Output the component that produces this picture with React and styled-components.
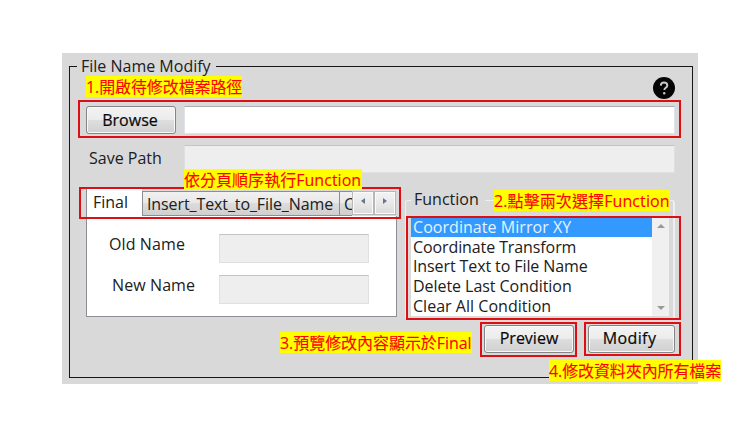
import React from "react";
import styled, { createGlobalStyle } from "styled-components";

const Global = createGlobalStyle`
  *, *::before, *::after { box-sizing: border-box; }
  body { margin: 0; background: #fff; overflow: hidden; }
  body, button, input { font: 16px/20px "Open Sans", "Noto Sans CJK TC", sans-serif; color: #202020; }
`;

const Page = styled.main`
  width: 755px;
  height: 424px;
  padding: 53px 0 0 62px;
`;
const Window = styled.div`
  position: relative;
  width: 636px;
  height: 331px;
  padding: 13px 5px 6px 7px;
  background: #d9d9d9;
`;
const Group = styled.section`
  height: 312px;
  border: 1px solid #161616;
`;
const Text = styled.span`
  display: block;
  white-space: nowrap;
  letter-spacing: ${(p) => p.$ls || 0}px;
  line-height: 20px;
`;
const Legend = styled.div`
  width: 139px;
  height: 20px;
  margin: -11px 0 0 7px;
  padding-left: 4px;
  background: #d9d9d9;
`;
const HelpRow = styled.div`
  display: flex;
  justify-content: flex-end;
  height: 30px;
  padding: 1px 17px 0 0;
`;
const Row = styled.div`
  display: flex;
  gap: 8px;
  height: 28px;
  padding-left: 16px;
  margin-bottom: ${(p) => p.$below || 0}px;
`;
const Caption = styled.div`
  width: 90px;
  padding: 3px 0 0 3px;
`;
const Button = styled.button`
  display: flex;
  justify-content: center;
  width: ${(p) => p.$w}px;
  height: 28px;
  padding: ${(p) => p.$top}px ${(p) => p.$right || 0}px 0 0;
  border: 1px solid #858585;
  border-radius: 3px;
  box-shadow: inset 0 0 0 1px #f8f8f8;
  background: linear-gradient(#f3f3f3, #ececec 48%, #dedede 50%, #d0d0d0);
  color: #080808;
  -webkit-text-stroke: 0.2px #080808;
`;
const Field = styled.input`
  width: ${(p) => p.$w}px;
  height: ${(p) => p.$h || 28}px;
  border: 1px solid ${(p) => (p.$edit ? "#dde3e9" : "#e0e0e0")};
  border-top-color: ${(p) => (p.$edit ? "#abadb3" : "#c4c4c4")};
  background: ${(p) => (p.$edit ? "#fff" : "#eee")};
  outline: 0;
`;
const Columns = styled.div`
  display: flex;
  padding-left: 16px;
  gap: 8px;
  height: 132px;
`;
const Tabs = styled.div`
  width: 311px;
  padding-top: 3px;
`;
const TabStrip = styled.div`
  display: flex;
  align-items: flex-start;
  height: 27px;
`;
const ActiveTab = styled.div`
  width: 56px;
  height: 28px;
  padding: 3px 0 0 6px;
  background: #fff;
  border-left: 1px solid #8c8e94;
`;
const Tab = styled.div`
  width: ${(p) => p.$w}px;
  height: 25px;
  margin-top: 2px;
  padding: 2px 0 0 4px;
  overflow: hidden;
  border: 1px solid #8c8e94;
  border-right-width: ${(p) => (p.$cut ? 0 : 1)}px;
  border-left-width: ${(p) => (p.$cut ? 0 : 1)}px;
  background: linear-gradient(#f1f1f1, #e8e8e8 48%, #dcdcdc 50%, #cfcfcf);
`;
const Spin = styled.button`
  display: grid;
  place-items: center;
  width: 22px;
  height: 24px;
  margin-top: 2px;
  padding: 0 0 4px;
  border: 1px solid #b8b8b8;
  box-shadow: inset 0 0 0 1px #fafafa;
  background: linear-gradient(#f3f3f3, #e9e9e9 50%, #dadada);
`;
const TabPanel = styled.div`
  height: 101px;
  padding: 18px 0 0 22px;
  background: #fff;
  border: 1px solid #8c8e94;
  border-top: 0;
`;
const NameRow = styled.div`
  display: flex;
  height: 41px;
`;
const NameLabel = styled.div`
  width: 110px;
  padding-left: ${(p) => p.$indent}px;
`;
const FunctionGroup = styled.section`
  width: 270px;
  height: 118px;
  margin-top: 14px;
  border: 1px solid #efefef;
  border-width: 1px 2px 0 1px;
  border-radius: 3px 3px 0 0;
`;
const FunctionLegend = styled.div`
  width: 74px;
  height: 20px;
  margin: -12px 0 8px 5px;
  padding-left: 3px;
  background: #d9d9d9;
`;
const List = styled.div`
  display: flex;
  width: 258px;
  height: 99px;
  margin-left: 5px;
  background: #fff;
`;
const Items = styled.div`
  width: 241px;
`;
const Item = styled.div`
  height: 19.7px;
  padding-left: 2px;
  background: ${(p) => (p.$selected ? "#3399ff" : "#fff")};
  color: ${(p) => (p.$selected ? "#e4f3ff" : "#202020")};
`;
const Scroll = styled.div`
  display: flex;
  flex-direction: column;
  justify-content: space-between;
  align-items: center;
  width: 17px;
  padding: 7px 0 6px;
  background: #f0f0f0;
`;
const Actions = styled.div`
  display: flex;
  justify-content: flex-end;
  gap: 14px;
  padding: 7px 17px 0 0;
`;
const Mark = styled.div`
  position: absolute;
  left: ${(p) => p.$x}px;
  top: ${(p) => p.$y}px;
  width: ${(p) => p.$w}px;
  height: ${(p) => p.$h}px;
  border: 2px solid #dc1014;
  pointer-events: none;
`;
const Note = styled.div`
  position: absolute;
  left: ${(p) => p.$x}px;
  top: ${(p) => p.$y}px;
  width: ${(p) => p.$w}px;
  height: 21px;
  padding-top: 1px;
  background: #ff0;
  color: #f00;
  -webkit-text-stroke: 0.1px #f00;
`;

const items = [
  ["Coordinate Mirror XY", 0.05],
  ["Coordinate Transform", -0.1],
  ["Insert Text to File Name", -0.1],
  ["Delete Last Condition", -0.05],
  ["Clear All Condition", 0.03],
];
const marks = [
  [16, 47, 603, 38],
  [17, 134, 322, 32],
  [344, 163, 275, 104],
  [418, 269, 97, 35],
  [522, 269, 97, 34],
];
const notes = [
  ["1.開啟待修改檔案路徑", 24, 23, 156, -0.1],
  ["依分頁順序執行Function", 122, 116, 178, 0.03],
  ["2.點擊兩次選擇Function", 432, 137, 176, 0.1],
  ["3.預覽修改內容顯示於Final", 218, 279, 192, -0.05],
  ["4.修改資料夾內所有檔案", 487, 307, 172, -0.1],
];

const Arrow = ({ d, w, h, fill }) => (
  <svg width={w} height={h} viewBox={`0 0 ${w} ${h}`}><path d={d} fill={fill} /></svg>
);

const HelpIcon = () => (
  <svg width="22" height="22" viewBox="0 0 22 22">
    <circle cx="11" cy="11" r="11" fill="#050505" />
    <path d="M7.8 8.6C7.9 6.4 9.2 5.5 11 5.5c2 0 3.3 1.1 3.3 2.9 0 2.4-3 2.5-3 4.7" fill="none" stroke="#c9c9c9" strokeWidth="1.9" />
    <circle cx="11.2" cy="16.2" r="1.2" fill="#c9c9c9" />
  </svg>
);

export default function App() {
  return (
    <Page>
      <Global />
      <Window>
        <Group>
          <Legend><Text>File Name Modify</Text></Legend>
          <HelpRow><HelpIcon /></HelpRow>
          <Row $below={11}>
            <Button $w={90} $top={3} $right={2}><Text>Browse</Text></Button>
            <Field $w={491} $edit />
          </Row>
          <Row $below={13}>
            <Caption><Text>Save Path</Text></Caption>
            <Field $w={491} readOnly />
          </Row>
          <Columns>
            <Tabs>
              <TabStrip>
                <ActiveTab><Text>Final</Text></ActiveTab>
                <Tab $w={198}><Text $ls={-0.1}>Insert_Text_to_File_Name</Text></Tab>
                <Tab $w={12} $cut><Text>Coordinate</Text></Tab>
                <Spin><Arrow w={4} h={6} d="M4 0v6L0 3z" fill="#66758e" /></Spin>
                <Spin><Arrow w={4} h={6} d="M0 0v6l4-3z" fill="#66758e" /></Spin>
              </TabStrip>
              <TabPanel>
                <NameRow><NameLabel $indent={0}><Text $ls={0.1}>Old Name</Text></NameLabel><Field $w={150} $h={29} readOnly /></NameRow>
                <NameRow><NameLabel $indent={3}><Text $ls={0.1}>New Name</Text></NameLabel><Field $w={150} $h={29} readOnly /></NameRow>
              </TabPanel>
            </Tabs>
            <FunctionGroup>
              <FunctionLegend><Text>Function</Text></FunctionLegend>
              <List>
                <Items>
                  {items.map(([t, ls], i) => (
                    <Item key={t} $selected={i === 0}><Text $ls={ls}>{t}</Text></Item>
                  ))}
                </Items>
                <Scroll>
                  <Arrow w={8} h={4} d="M0 4h8L4 0z" fill="#999" />
                  <Arrow w={8} h={4} d="M0 0h8L4 4z" fill="#999" />
                </Scroll>
              </List>
            </FunctionGroup>
          </Columns>
          <Actions>
            <Button $w={90} $top={2}><Text>Preview</Text></Button>
            <Button $w={87} $top={2} $right={4}><Text $ls={0.4}>Modify</Text></Button>
          </Actions>
        </Group>
        {marks.map(([x, y, w, h]) => <Mark key={`${x}-${y}`} $x={x} $y={y} $w={w} $h={h} />)}
        {notes.map(([t, x, y, w, ls]) => (
          <Note key={t} $x={x} $y={y} $w={w}><Text $ls={ls}>{t}</Text></Note>
        ))}
      </Window>
    </Page>
  );
}
